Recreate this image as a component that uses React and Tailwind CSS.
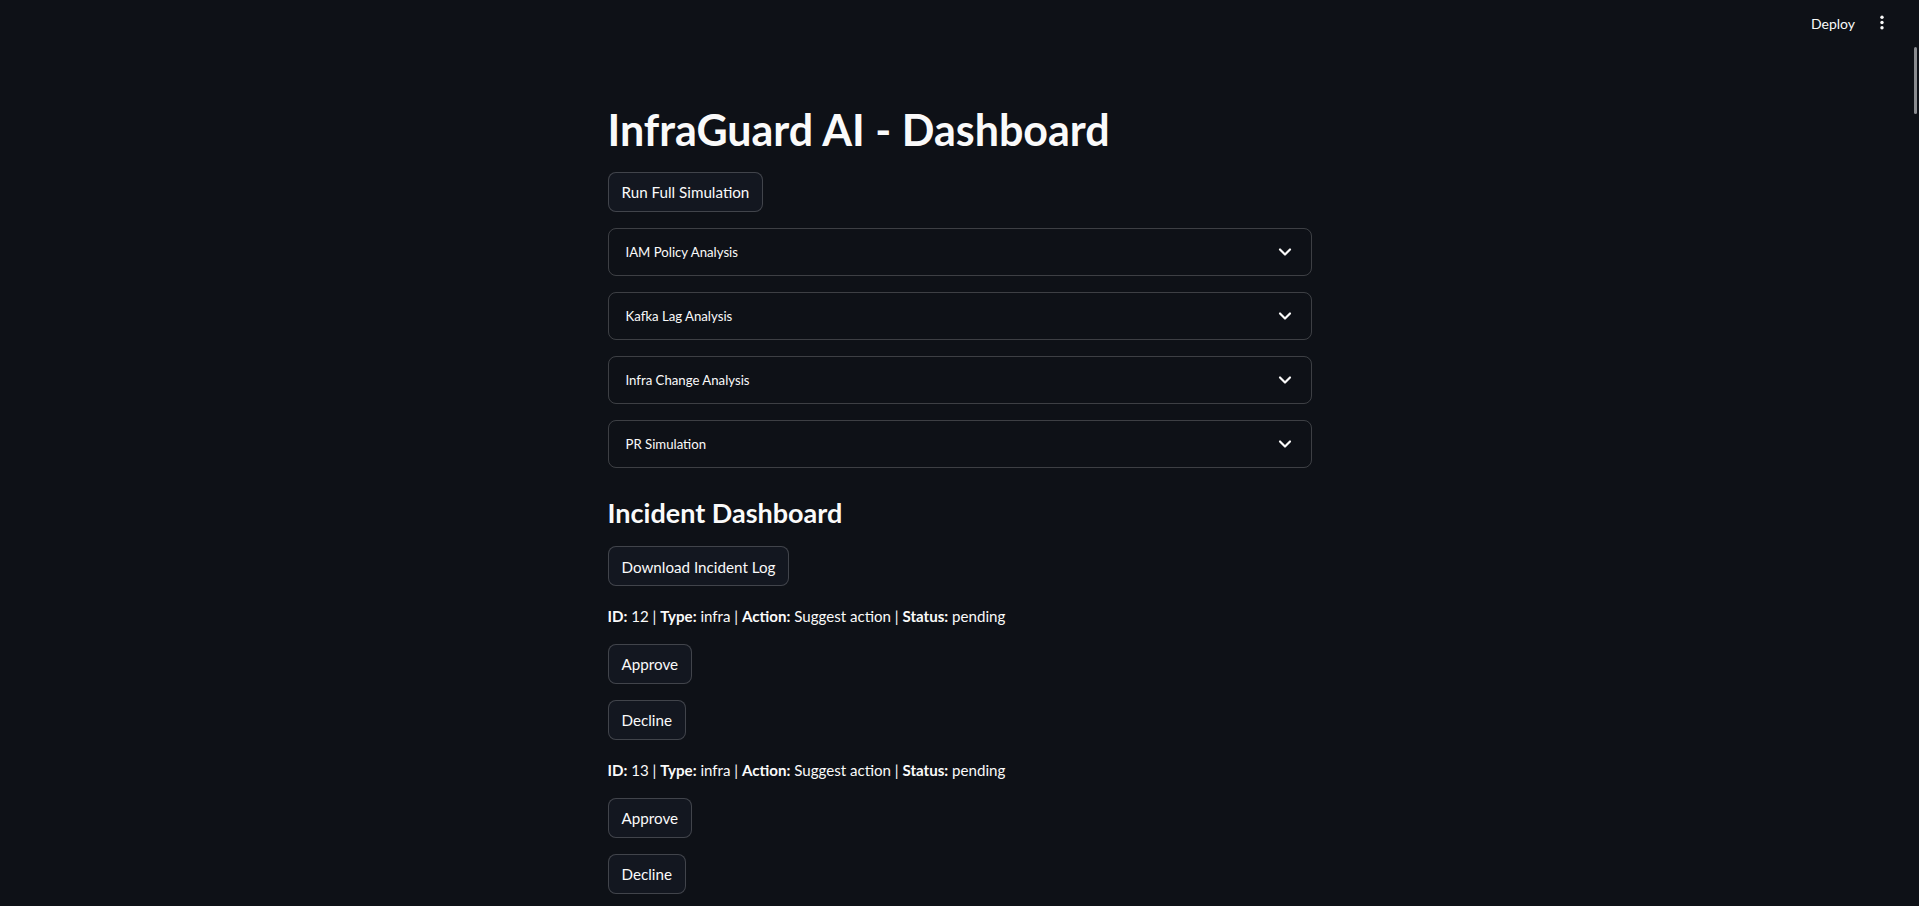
import React from "react";

function Chevron() {
  return (
    <svg width="20" height="20" viewBox="0 0 24 24" fill="none" stroke="#fafafa" strokeWidth="2.6" strokeLinecap="round" strokeLinejoin="round">
      <path d="m6 9 6 6 6-6" />
    </svg>
  );
}

function Kebab() {
  return (
    <svg width="6" height="16" viewBox="0 0 6 16" fill="#fafafa">
      <circle cx="3" cy="2.3" r="1.7" />
      <circle cx="3" cy="7.5" r="1.7" />
      <circle cx="3" cy="12.7" r="1.7" />
    </svg>
  );
}

function Btn({ children }) {
  return (
    <div className="flex">
      <button className="h-10 px-[13px] pt-[2px] rounded-lg border border-[rgba(250,250,250,0.2)] bg-[#131720] text-[#fafafa] text-[15.2px] leading-none">
        {children}
      </button>
    </div>
  );
}

function Expander({ label }) {
  return (
    <div className="h-12 rounded-lg border border-[rgba(250,250,250,0.2)] flex items-center justify-between pl-[17px] pr-[16px]">
      <span className="text-[13.2px] pt-[2px] text-[#fafafa]">{label}</span>
      <Chevron />
    </div>
  );
}

function Row({ id }) {
  return (
    <p className="h-[25.6px] pt-[3px] text-[15.1px] leading-[22.6px] text-[#fafafa]">
      <b className="font-bold">ID:</b> {id} | <b className="font-bold">Type:</b> infra | <b className="font-bold">Action:</b> Suggest action | <b className="font-bold">Status:</b> pending
    </p>
  );
}

export default function App() {
  return (
    <div className="relative h-[906px] w-full overflow-hidden bg-[#0e1117] text-[#fafafa] [font-family:Lato,sans-serif]">
      <header className="h-[46px] flex items-center justify-end pr-[34px] gap-[24px]">
        <span className="text-[14px] text-[#fafafa]">Deploy</span>
        <Kebab />
      </header>
      <main className="w-[704px] mx-auto pt-[57px] flex flex-col gap-4">
        <h1 className="text-[43px] leading-[52.8px] pt-[1px] h-[52.8px] font-bold">InfraGuard AI - Dashboard</h1>
        <Btn>Run Full Simulation</Btn>
        <Expander label="IAM Policy Analysis" />
        <Expander label="Kafka Lag Analysis" />
        <Expander label="Infra Change Analysis" />
        <Expander label="PR Simulation" />
        <h2 className="text-[27px] leading-[33.6px] font-bold pt-3 pb-[1px]">Incident Dashboard</h2>
        <Btn>Download Incident Log</Btn>
        <Row id="12" />
        <Btn>Approve</Btn>
        <Btn>Decline</Btn>
        <Row id="13" />
        <Btn>Approve</Btn>
        <Btn>Decline</Btn>
      </main>
      <div className="absolute right-[2px] top-[47px] w-[3px] h-[67px] rounded-full bg-[#8a8c90]" />
    </div>
  );
}
